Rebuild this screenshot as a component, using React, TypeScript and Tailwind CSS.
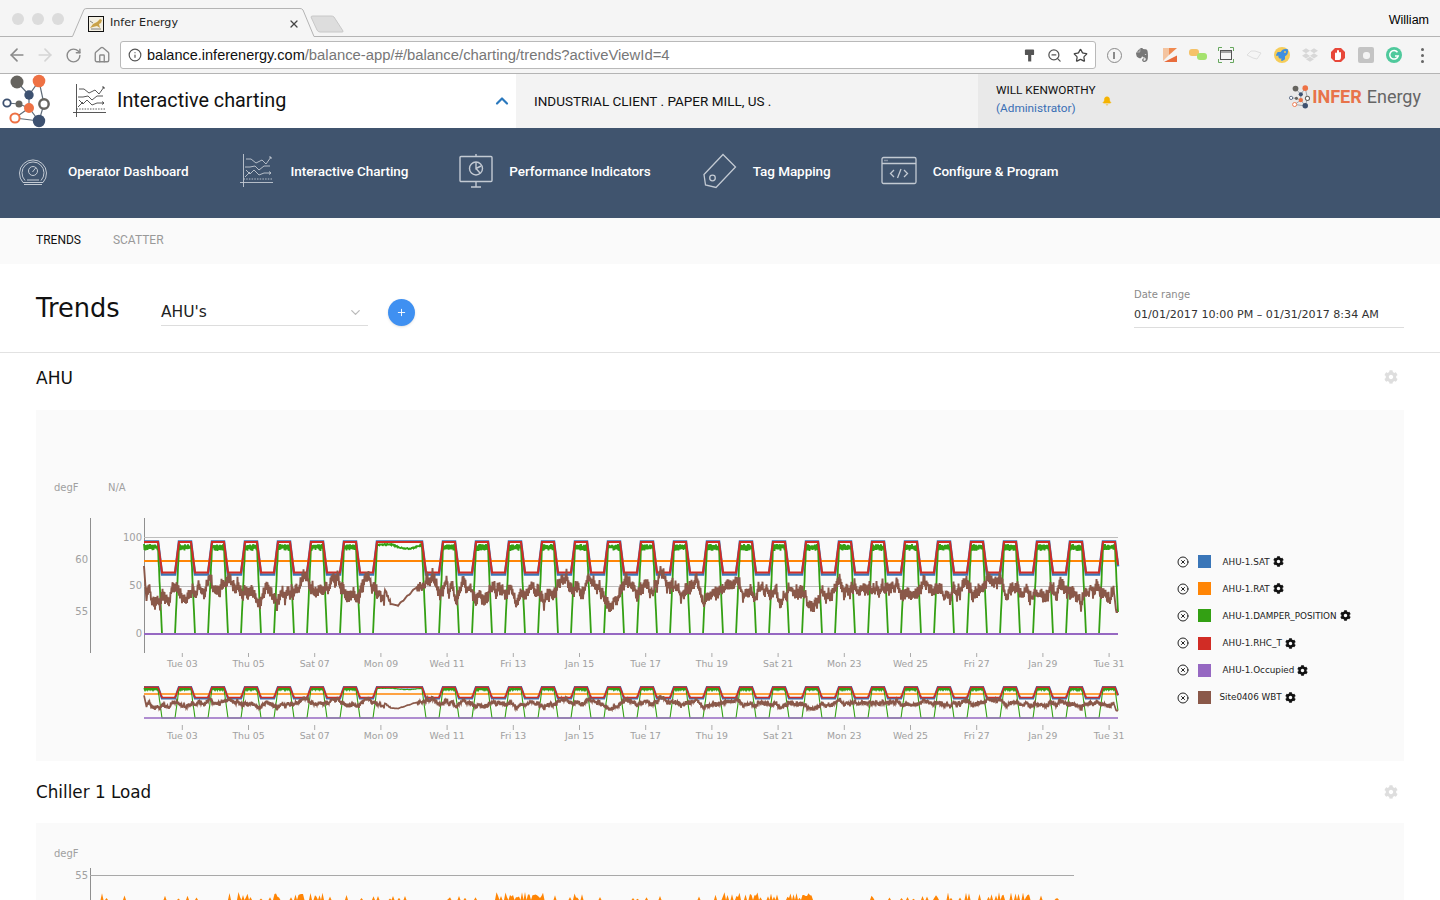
import React from 'react';
import { ArrowLeft, ArrowRight, RotateCw, Home, Info, ZoomOut, Star, ChevronUp, ChevronDown, Plus, Bell, X, CircleX } from 'lucide-react';
import { FaCog, FaEvernote, FaDropbox, FaRocket } from 'react-icons/fa';

let seed = 12345;
const rnd = () => { seed = (seed * 1664525 + 1013904223) % 4294967296; return seed / 4294967296; };

const pulse = (x: number) => {
  if (x < 158) return 1;
  if (x < 162) return (162 - x) / 4;
  const k = Math.floor((x - 175) / 33);
  const t = x - (175 + 33 * k);
  if (k === 6 && t >= 4) return 1;
  if (k === 7 && t < 4) return 1;
  if (t < 4) return t / 4;
  if (t < 16) return 1;
  if (t < 20) return (20 - t) / 4;
  return 0;
};

type P = [number, number];
const blue: P[] = [], red: P[] = [], green: P[] = [], brown: P[] = [];
let bv = 590;
let flip = false;
for (let x = 144; x <= 1118; x += 0.5) {
  flip = !flip;
  const p = pulse(x);
  blue.push([x, 574.5 - p * 33]);
  red.push([x, 572.5 - p * 30.5]);
  const inWide = x > 376 && x < 422;
  const topG = inWide
    ? 544 + 4 * Math.max(0, Math.sin(((x - 392) / 30) * Math.PI)) + rnd() * 1.2
    : flip ? 544 + rnd() * 2 : 548 + rnd() * 3;
  const pg = pulse(x);
  green.push([x, pg > 0.02 ? 634 - pg * (634 - topG) : 634]);
  const day = ((x - 144) / 33) * Math.PI * 2;
  const target = 591 + 6 * Math.sin(day * 1 + 0.8) + 4 * Math.sin(day / 3.3);
  bv += (target - bv) * 0.1 + (rnd() - 0.5) * 9;
  let y = bv + (flip ? 3.5 : -3.5) + (rnd() - 0.5) * 3;
  if (x >= 385 && x < 391) y = 590 + ((x - 385) / 6) * 14 + (rnd() - 0.5) * 3;
  else if (x >= 391 && x < 398) y = 604 + ((x - 391) / 7) * 1.5;
  else if (x >= 398 && x < 417) y = 605.5 - ((x - 398) / 19) * 19 + Math.sin(x) * 0.5;
  else if (x >= 417 && x < 424) y = 587 + (rnd() - 0.5) * 10;
  if (x < 147) y = 566 + (x - 144) * 14;
  if (x > 1114) y = 592 + (x - 1114) * 9;
  brown.push([x, Math.min(612, Math.max(566, y))]);
}
const d = (pts: P[], ov = false) =>
  'M' + pts.map(([x, y]) => `${x} ${(ov ? 687 + (y - 541) / 3 : y).toFixed(1)}`).join('L');

const ticks = ['Tue 03', 'Thu 05', 'Sat 07', 'Mon 09', 'Wed 11', 'Fri 13', 'Jan 15', 'Tue 17', 'Thu 19', 'Sat 21', 'Mon 23', 'Wed 25', 'Fri 27', 'Jan 29', 'Tue 31'];

let chiller = 'M90 900';
for (let x = 90; x <= 1062; x += 1.5) {
  const cluster = Math.sin(x / 37) + Math.sin(x / 11.3) * 0.6;
  const spike = rnd();
  const y = cluster > 0.35 && spike > 0.55 ? 892 + rnd() * 6 : spike > 0.88 ? 895 + rnd() * 4 : 900;
  chiller += `L${x} ${y.toFixed(1)}`;
}
chiller += 'L1062 900Z';

function Logo({ className }: { className: string }) {
  return (
    <svg viewBox="0 0 52 54" className={className}>
      <g stroke="#5f6b78" strokeWidth="1.2" fill="none">
        <path d="M17 82L29 95L39 81L44 104L39 121L29 108L19 104L7 103M29 95L29 108M15 118L39 121M29 108L15 118" transform="translate(0 -74)" />
      </g>
      <g transform="translate(0 -74)">
        <circle cx="17" cy="82" r="6.5" fill="#66645f" />
        <circle cx="39" cy="81" r="6.3" fill="#ee7144" />
        <circle cx="29" cy="95" r="4.7" fill="#3d5170" />
        <circle cx="7" cy="103" r="3.7" fill="#fff" stroke="#3d5170" strokeWidth="1.8" />
        <circle cx="19" cy="104" r="3.5" fill="#66645f" />
        <circle cx="29" cy="108" r="5" fill="#ee7144" />
        <circle cx="44" cy="104" r="4.7" fill="#fff" stroke="#66645f" strokeWidth="2.4" />
        <circle cx="15" cy="118" r="4.6" fill="#fff" stroke="#ee7144" strokeWidth="2" />
        <circle cx="39" cy="121" r="6.2" fill="#3d5170" />
      </g>
    </svg>
  );
}

function ChartIcon({ className }: { className: string }) {
  return (
    <svg viewBox="0 0 34 34" fill="none" stroke="currentColor" strokeWidth="0.9" className={className}>
      <path d="M3.5 0V33M0 28.5H33" />
      <path d="M3.5 25H32" strokeDasharray="1.5 1.2" />
      <path d="M6 5H11L16 9L22 6L26 10L31 3M29 3H31V5" />
      <path d="M5 13H10L15 12L19 16L24 12L30 12" />
      <path d="M6 16L10 20L14 16L19 21L24 19H31M29 17.5L31 19L29 20.5" />
      <path d="M5 23L10 18" />
    </svg>
  );
}

function Gauge() {
  return (
    <svg viewBox="0 0 30 30" fill="none" stroke="#c3cad3" strokeWidth="1" className="w-[30px] h-[30px]">
      <path d="M5 26.5A13.5 13.5 0 1 1 25 26.5Z" />
      <path d="M7 24.5A11 11 0 1 1 23 24.5" />
      <circle cx="15" cy="15" r="4.5" />
      <path d="M14.5 16L18 11.5M9 24H21" />
      <path d="M6 28.5H24" />
    </svg>
  );
}
function Board() {
  return (
    <svg viewBox="0 0 36 36" fill="none" stroke="#c3cad3" strokeWidth="1.4" className="w-[36px] h-[36px]">
      <rect x="2" y="3.5" width="32" height="25" rx="1" />
      <path d="M18 1V3.5M18 28.5V34M13 34H23" />
      <circle cx="18" cy="15.5" r="6.5" />
      <path d="M18 9V15.5L23 13M18 15.5L22 20" />
    </svg>
  );
}
function Tag() {
  return (
    <svg viewBox="0 0 36 36" fill="none" stroke="#c3cad3" strokeWidth="1.3" className="w-[36px] h-[36px]">
      <path d="M21 1.5L33.5 14L14 34.5L3.5 32L2 21.5Z" />
      <circle cx="10.5" cy="25" r="2.8" />
    </svg>
  );
}
function Code() {
  return (
    <svg viewBox="0 0 36 30" fill="none" stroke="#c3cad3" strokeWidth="1.3" className="w-[36px] h-[30px]">
      <rect x="1" y="1.5" width="34" height="26" rx="1.5" />
      <path d="M1 7.5H35" />
      <path d="M3.5 4.5H7" strokeDasharray="1 1" />
      <path d="M13 14L9.5 17.5L13 21M23 14L26.5 17.5L23 21M20 13L16.5 22" />
    </svg>
  );
}

function NavItem({ icon, label, w, ml }: { icon: React.ReactNode; label: string; w: string; ml: string }) {
  return (
    <div className={`flex items-center ${ml}`}>
      <div className={`flex items-center ${w}`}>{icon}</div>
      <span className="text-[13.5px] font-medium text-white whitespace-nowrap tracking-[-0.05px]">{label}</span>
    </div>
  );
}

const legend = [
  { c: '#3a76b8', t: 'AHU-1.SAT', ml: 'ml-[12px]' },
  { c: '#ff8505', t: 'AHU-1.RAT', ml: 'ml-[12px]' },
  { c: '#33a013', t: 'AHU-1.DAMPER_POSITION', ml: 'ml-[12px]' },
  { c: '#d12c25', t: 'AHU-1.RHC_T', ml: 'ml-[12px]' },
  { c: '#9668c2', t: 'AHU-1.Occupied', ml: 'ml-[12px]' },
  { c: '#8a5849', t: 'Site0406 WBT', ml: 'ml-[9px]' },
];

export default function App() {
  return (
    <div className="w-[1440px] h-[900px] overflow-hidden bg-white font-['Roboto',sans-serif] text-black">
      {/* Browser tabs */}
      <div className="h-[40px] bg-[#f5f5f5] flex relative">
        <div className="flex gap-[8px] pl-[12px] pt-[13px] w-[74px]">
          <span className="w-[12px] h-[12px] rounded-full bg-[#dcdcdc]" />
          <span className="w-[12px] h-[12px] rounded-full bg-[#dcdcdc]" />
          <span className="w-[12px] h-[12px] rounded-full bg-[#dcdcdc]" />
        </div>
        <svg viewBox="0 0 1440 40" className="absolute inset-0 w-[1440px] h-[40px]" fill="none">
          <path d="M0 36.5H72.5L84 9.5Q85 8.5 87 8.5H300Q302 8.5 303 10L314 36.5H1440" stroke="#b4b4b4" />
          <path d="M311 17Q311 16 313 16H331Q333 16 334 17L343 31Q343.5 32 342 32H320Q318 32 317 30Z" fill="#dddddd" stroke="#c8c8c8" />
        </svg>
        <div className="relative flex items-center h-[37px] pt-[10px] ml-[14px] w-[212px]">
          <svg viewBox="0 0 16 16" className="w-[16px] h-[16px] shrink-0">
            <rect x="0.5" y="0.5" width="15" height="15" fill="#f3efe2" stroke="#111" />
            <path d="M2 12L5 8L9 6L12 3L14 4L13 7L11 8L12 12L9 10L5 11Z" fill="#c9a24a" />
            <path d="M2 5L5 7M3 13H13" stroke="#555" strokeWidth="0.7" />
          </svg>
          <span className="ml-[6px] text-[11.1px] font-['DejaVu_Sans',sans-serif] text-[#222]">Infer Energy</span>
          <X size={12} strokeWidth={2.6} className="ml-auto text-[#444]" />
        </div>
        <span className="ml-auto relative mt-[11px] mr-[11px] text-[12.5px] font-['Liberation_Sans',sans-serif]">William</span>
      </div>

      {/* Toolbar */}
      <div className="h-[34px] bg-[#f5f5f5] border-b border-[#b4b4b4] flex items-start">
        <div className="flex items-center h-[30px] w-[120px] pl-[7px] text-[#8a8a8a]">
          <ArrowLeft size={20} strokeWidth={2} />
          <ArrowRight size={20} strokeWidth={2} className="ml-[8px] text-[#d5d5d5]" />
          <RotateCw size={17} strokeWidth={2} className="ml-[10px]" />
          <Home size={18} strokeWidth={1.8} className="ml-[11px]" />
        </div>
        <div className="mt-[1px] w-[976px] h-[28px] bg-white border border-[#b9b9b9] rounded-[3px] flex items-center pl-[7px] pr-[7px]">
          <Info size={14} strokeWidth={2} className="text-[#555]" />
          <span className="ml-[5px] text-[14.5px] font-['Liberation_Sans',sans-serif] text-[#111] whitespace-nowrap">
            balance.inferenergy.com<span className="text-[14.85px] text-[#777]">/balance-app/#/balance/charting/trends?activeViewId=4</span>
          </span>
          <svg viewBox="0 0 12 14" className="ml-auto w-[11px] h-[13px]" fill="#555"><rect x="1" y="0.5" width="10" height="6" rx="1" /><rect x="4.5" y="5" width="3.4" height="8.5" /></svg>
          <ZoomOut size={15} strokeWidth={2} className="ml-[12px] text-[#555]" />
          <Star size={15} strokeWidth={2} className="ml-[11px] text-[#444]" />
        </div>
        <div className="flex items-center h-[30px] pl-[4px]">
          <span className="w-[28px] flex justify-center"><span className="w-[15px] h-[15px] rounded-full border-[1.5px] border-[#8a8a8a] flex items-center justify-center"><span className="w-[2px] h-[7px] bg-[#8a8a8a]" /></span></span>
          <span className="w-[28px] flex justify-center"><FaEvernote size={16} className="text-[#777]" /></span>
          <span className="w-[28px] flex justify-center">
            <svg viewBox="0 0 16 16" className="w-[16px] h-[16px]"><path d="M1 1H7V8L1 14Z" fill="#f4c4a0" /><path d="M7 1H15L7 8Z" fill="#f08a50" /><path d="M2 15L15 8.5V15Z" fill="#e86c3c" /></svg>
          </span>
          <span className="w-[28px] flex justify-center">
            <svg viewBox="0 0 18 14" className="w-[18px] h-[14px]"><rect x="0" y="1" width="10" height="7" rx="3" fill="#f5c268" /><rect x="8" y="5" width="10" height="7" rx="3" fill="#a5e26e" /></svg>
          </span>
          <span className="w-[28px] flex justify-center">
            <svg viewBox="0 0 16 16" fill="none" className="w-[16px] h-[16px]"><path d="M0.5 4V0.5H4M12 0.5H15.5V4M15.5 12V15.5H12M4 15.5H0.5V12" stroke="#67a85e" /><rect x="2.5" y="3.5" width="11" height="9" stroke="#555" /><path d="M2.5 5H13.5" stroke="#555" /></svg>
          </span>
          <span className="w-[28px] flex justify-center">
            <svg viewBox="0 0 16 10" fill="none" className="w-[16px] h-[10px]"><path d="M1 5L5 1H9L15 3L11 9L7 8Z" stroke="#dedede" /></svg>
          </span>
          <span className="w-[28px] flex justify-center">
            <span className="w-[16px] h-[16px] rounded-full bg-[#f5cd5a] flex items-center justify-center"><FaRocket size={12} className="text-[#3f8fe0]" /></span>
          </span>
          <span className="w-[28px] flex justify-center"><FaDropbox size={16} className="text-[#d8d8d8]" /></span>
          <span className="w-[28px] flex justify-center">
            <svg viewBox="0 0 16 16" className="w-[16px] h-[16px]"><path d="M5 1H11L15 5V11L11 15H5L1 11V5Z" fill="#e8483a" /><path d="M5 13V6.5A1 1 0 0 1 7 6.5V4A1 1 0 0 1 9 4V6A1 1 0 0 1 11 6V10Q11 13 9 13Z" fill="#fff" /></svg>
          </span>
          <span className="w-[28px] flex justify-center">
            <span className="w-[16px] h-[16px] rounded-[2px] bg-[#c4c4c4] flex items-center justify-center"><span className="w-[7px] h-[7px] bg-[#f4f4f4] rounded-[3px]" /></span>
          </span>
          <span className="w-[28px] flex justify-center">
            <svg viewBox="0 0 16 16" className="w-[16px] h-[16px]"><circle cx="8" cy="8" r="8" fill="#4fc99c" /><path d="M11.5 5.2A4.3 4.3 0 1 0 12.2 9H9" fill="none" stroke="#fff" strokeWidth="1.5" /></svg>
          </span>
          <span className="w-[28px] flex flex-col items-center gap-[3px]">
            <span className="w-[3px] h-[3px] rounded-full bg-[#666]" />
            <span className="w-[3px] h-[3px] rounded-full bg-[#666]" />
            <span className="w-[3px] h-[3px] rounded-full bg-[#666]" />
          </span>
        </div>
      </div>

      {/* App header */}
      <div className="h-[54px] flex">
        <div className="w-[516px] flex items-center">
          <Logo className="w-[52px] h-[54px] shrink-0" />
          <ChartIcon className="w-[34px] h-[34px] ml-[21px] text-[#444]" />
          <span className="ml-[10px] text-[19.8px] text-[#111] whitespace-nowrap">Interactive charting</span>
          <ChevronUp size={20} strokeWidth={2.6} className="ml-auto mr-[4px] text-[#2a78bd]" />
        </div>
        <div className="w-[462px] bg-[#f3f3f3] flex items-center pl-[18px] text-[13.5px] text-[#111]">INDUSTRIAL CLIENT . PAPER MILL, US .</div>
        <div className="flex-1 bg-[#e9e9e9] flex items-start pl-[18px]">
          <div className="pt-[7px] text-[11.8px] leading-[18px]">
            <div className="text-[#111]">WILL KENWORTHY</div>
            <div className="text-[#3a6fb5]">(Administrator)</div>
          </div>
          <Bell size={10} fill="#f5b301" strokeWidth={1.5} className="mt-[22px] ml-[6px] text-[#f5b301]" />
          <div className="ml-auto mr-[19px] mt-[9px] flex items-center">
            <Logo className="w-[23px] h-[24px]" />
            <span className="ml-[1px] text-[18px] font-bold text-[#e8734a]">INFER</span>
            <span className="ml-[5px] text-[18px] text-[#666]">Energy</span>
          </div>
        </div>
      </div>

      {/* Nav */}
      <div className="h-[90px] bg-[#40546e] flex items-center pb-[4px]">
        <NavItem ml="ml-[18px]" w="w-[50px]" icon={<Gauge />} label="Operator Dashboard" />
        <NavItem ml="ml-[52px]" w="w-[50px]" icon={<ChartIcon className="w-[34px] h-[34px] text-[#c3cad3]" />} label="Interactive Charting" />
        <NavItem ml="ml-[50px]" w="w-[51px]" icon={<Board />} label="Performance Indicators" />
        <NavItem ml="ml-[51px]" w="w-[51px]" icon={<Tag />} label="Tag Mapping" />
        <NavItem ml="ml-[50px]" w="w-[52px]" icon={<Code />} label="Configure & Program" />
      </div>

      {/* Sub nav */}
      <div className="h-[46px] bg-[#fafafa] flex items-center pl-[36px] pb-[2px] text-[12px]">
        <span className="text-[#111]">TRENDS</span>
        <span className="ml-[32px] text-[#999]">SCATTER</span>
      </div>

      {/* Trends header */}
      <div className="h-[89px] border-b border-[#e2e2e2] flex items-start pl-[36px] pr-[36px] font-['DejaVu_Sans',sans-serif]">
        <h1 className="mt-[26px] text-[25.7px] leading-[36px] text-[#111] w-[125px]">Trends</h1>
        <div className="mt-[36px] w-[207px] h-[26px] border-b border-[#ddd] flex items-center justify-between pr-[5px] text-[15.5px] text-[#222]">
          <span>AHU's</span>
          <ChevronDown size={15} className="text-[#bbb]" />
        </div>
        <button className="mt-[35px] ml-[20px] w-[27px] h-[27px] rounded-full bg-[#3f90f1] flex items-center justify-center shadow-sm">
          <Plus size={11} className="text-white" />
        </button>
        <div className="ml-auto w-[270px] mt-[25px] h-[39px] border-b border-[#ddd]">
          <div className="text-[10px] leading-[12px] text-[#8a8a8a]">Date range</div>
          <div className="mt-[7px] text-[11.1px] leading-[14px] text-[#333] whitespace-nowrap">01/01/2017 10:00 PM – 01/31/2017 8:34 AM</div>
        </div>
      </div>

      <div className="font-['DejaVu_Sans',sans-serif]">
        {/* AHU */}
        <div className="h-[57px] flex items-center justify-between pl-[36px] pr-[42px] pb-[7px]">
          <h2 className="text-[17px] leading-[24px] text-[#111]">AHU</h2>
          <FaCog size={14} className="text-[#dedede] -mt-[2px]" />
        </div>
        <div className="mx-[36px] h-[351px] bg-[#fafafa] flex">
          <svg viewBox="36 410 1130 351" className="w-[1130px] h-[351px] shrink-0" fontFamily="DejaVu Sans, sans-serif">
            <g fontSize="10" fill="#a0a0a0">
              <text x="54" y="491">degF</text>
              <text x="108" y="491">N/A</text>
              <text x="88" y="563" textAnchor="end">60</text>
              <text x="88" y="615" textAnchor="end">55</text>
              <text x="142" y="541" textAnchor="end">100</text>
              <text x="142" y="589" textAnchor="end">50</text>
              <text x="142" y="637" textAnchor="end">0</text>
            </g>
            <path d="M90.5 518V653M144.5 518V653" stroke="#8f8f8f" />
            <path d="M144 537.5H1118M144 586.5H1118" stroke="#bdbdbd" />
            <path d={d(blue)} fill="none" stroke="#3a76b8" strokeWidth="2.6" />
            <path d="M144 561H1118" stroke="#ff8505" strokeWidth="1.8" />
            <path d={d(green)} fill="none" stroke="#33a013" strokeWidth="1.8" />
            <path d={d(red)} fill="none" stroke="#d12c25" strokeWidth="2" />
            <path d="M144 634H1118" stroke="#9668c2" strokeWidth="1.8" />
            <path d={d(brown)} fill="none" stroke="#8a5849" strokeWidth="1.9" />

            <path d={d(blue, true)} fill="none" stroke="#3a76b8" strokeWidth="2.4" />
            <path d="M144 694H1118" stroke="#ff8505" strokeWidth="1.5" />
            <path d={d(green, true)} fill="none" stroke="#33a013" strokeWidth="1.1" />
            <path d={d(red, true)} fill="none" stroke="#d12c25" strokeWidth="1.5" />
            <path d="M144 718H1118" stroke="#9668c2" strokeWidth="1.6" />
            <path d={d(brown, true)} fill="none" stroke="#8a5849" strokeWidth="1.7" />

            {ticks.map((t, i) => {
              const x = 182.3 + i * 66.2;
              return (
                <g key={t + i}>
                  <path d={`M${x} 653V657M${x} 725V730`} stroke="#aaa" />
                  <text x={x} y="667" textAnchor="middle" fontSize="9.3" fill="#a0a0a0">{t}</text>
                  <text x={x} y="739" textAnchor="middle" fontSize="9.3" fill="#a0a0a0">{t}</text>
                </g>
              );
            })}
          </svg>
          <div className="pl-[11px] pt-[138px] flex flex-col">
            {legend.map((l) => (
              <div key={l.t} className="h-[27.2px] flex items-center">
                <CircleX size={12} strokeWidth={2} className="text-[#222] shrink-0 -ml-[0.5px]" />
                <span className="ml-[9px] w-[13px] h-[13px] shrink-0" style={{ backgroundColor: l.c }} />
                <span className={`${l.ml} text-[8.8px] pt-[1px] text-[#222] whitespace-nowrap`}>{l.t}</span>
                <FaCog size={11} className="ml-[3px] text-[#111]" />
              </div>
            ))}
          </div>
        </div>

        {/* Chiller */}
        <div className="h-[62px] flex items-center justify-between pl-[36px] pr-[42px]">
          <h2 className="text-[16.8px] leading-[24px] text-[#111]">Chiller 1 Load</h2>
          <FaCog size={14} className="text-[#dedede]" />
        </div>
        <div className="mx-[36px] h-[200px] bg-[#fafafa]">
          <svg viewBox="36 823 1130 200" className="w-[1130px] h-[200px]" fontFamily="DejaVu Sans, sans-serif">
            <text x="54" y="857" fontSize="10" fill="#a0a0a0">degF</text>
            <text x="88" y="879" fontSize="10" fill="#a0a0a0" textAnchor="end">55</text>
            <path d="M90.5 868V1000" stroke="#8f8f8f" />
            <path d="M90 875.5H1074" stroke="#a8a8a8" />
            <path d={chiller} fill="#ff8505" />
          </svg>
        </div>
      </div>
    </div>
  );
}
